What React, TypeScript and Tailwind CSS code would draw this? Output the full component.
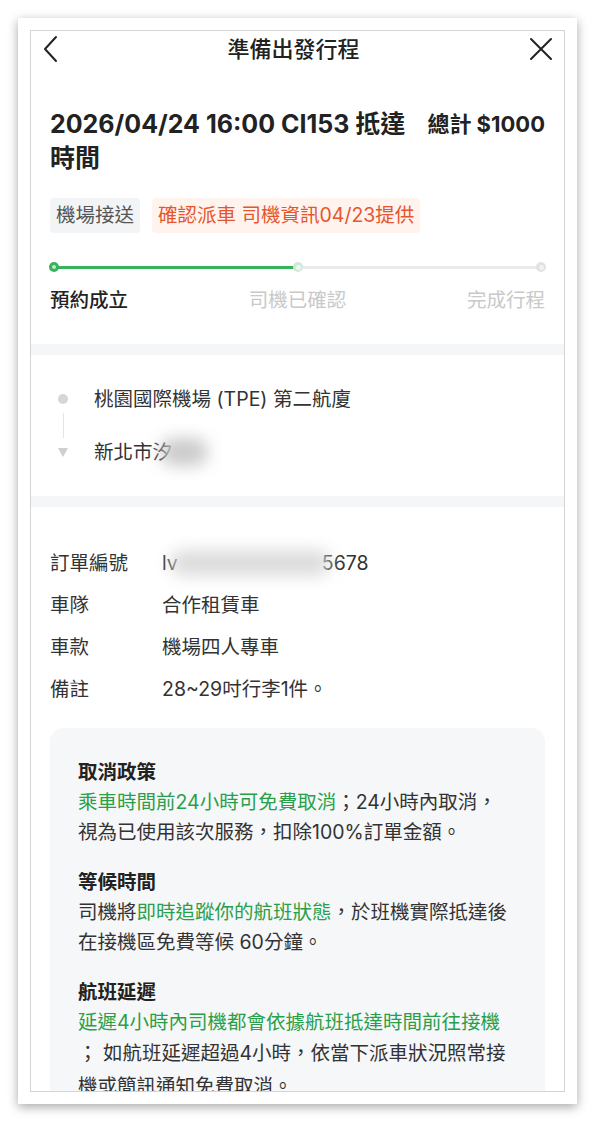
import React from "react";

const FONT = { fontFamily: '"Inter", "Noto Sans CJK TC", sans-serif' };

function Header() {
    return (
        <div className="flex items-center justify-between h-[36px] px-[11px]">
            <svg width="16" height="28" viewBox="0 0 16 28" fill="none">
                <path d="M14 2 L3 14 L14 26" stroke="#222" strokeWidth="2" strokeLinecap="round" strokeLinejoin="round" />
            </svg>
            <h1 className="text-[22px] font-medium text-[#222]">準備出發行程</h1>
            <svg width="24" height="24" viewBox="0 0 24 24" fill="none">
                <path d="M2 2 L22 22 M22 2 L2 22" stroke="#222" strokeWidth="2" strokeLinecap="round" />
            </svg>
        </div>
    );
}

function Progress() {
    return (
        <div className="mt-[29px]">
            <div className="relative h-[10px] mx-[-1px]">
                <div className="absolute left-[5px] right-[5px] top-[3.5px] h-[3px] bg-[#ebebeb]" />
                <div className="absolute left-[5px] w-[244px] top-[3.5px] h-[3px] bg-[#35b45a]" />
                <div className="absolute left-0 top-0 w-[10px] h-[10px] rounded-full bg-[#35b45a] flex items-center justify-center">
                    <div className="w-[4px] h-[4px] rounded-full bg-[#bfe8cb]" />
                </div>
                <div className="absolute left-[244px] top-0 w-[10px] h-[10px] rounded-full bg-[#cfe9d6] flex items-center justify-center">
                    <div className="w-[5px] h-[5px] rounded-full bg-[#eef7f1]" />
                </div>
                <div className="absolute right-0 top-0 w-[10px] h-[10px] rounded-full bg-[#e2e2e2] flex items-center justify-center">
                    <div className="w-[5px] h-[5px] rounded-full bg-[#f1f1f1]" />
                </div>
            </div>
            <div className="flex justify-between mt-[14px] text-[19.5px] leading-[28px]">
                <span className="text-[#222] font-medium">預約成立</span>
                <span className="text-[#c9c9c9]">司機已確認</span>
                <span className="text-[#c9c9c9]">完成行程</span>
            </div>
        </div>
    );
}

function Route() {
    return (
        <div className="px-[19px] pt-[30px] pb-[30px] text-[19.5px] leading-[28px] text-[#333]">
            <div className="flex items-center h-[28px]">
                <div className="w-[26px] flex justify-center">
                    <div className="w-[10px] h-[10px] rounded-full bg-[#d6d6d6]" />
                </div>
                <span className="ml-[18px]">桃園國際機場 (TPE) 第二航廈</span>
            </div>
            <div className="flex h-[25px]">
                <div className="w-[26px] flex justify-center">
                    <div className="w-px h-full bg-[#e4e4e4]" />
                </div>
            </div>
            <div className="flex items-center h-[28px]">
                <div className="w-[26px] flex justify-center">
                    <div className="w-0 h-0 border-l-[5px] border-r-[5px] border-t-[9px] border-l-transparent border-r-transparent border-t-[#cfcfcf]" />
                </div>
                <span className="ml-[18px] flex items-center">
                    新北市汐
                    <span className="inline-block w-[48px] h-[28px] ml-[-12px] rounded-full bg-[#cbcbcb] blur-[8px]" />
                </span>
            </div>
        </div>
    );
}

function DetailRow({ label, children }: { label: string; children: React.ReactNode }) {
    return (
        <div className="flex items-center h-[28px]">
            <span className="w-[112px] shrink-0">{label}</span>
            <span className="flex items-center">{children}</span>
        </div>
    );
}

function Policy() {
    return (
        <div className="mx-[19px] mt-[25px] rounded-[14px] bg-[#f6f7f9] px-[28px] pt-[29px] pb-[30px] text-[19.5px] leading-[30px] text-[#333]">
            <h3 className="font-semibold text-[#222]">取消政策</h3>
            <div className="whitespace-nowrap"><span className="text-[#2a9f4a]">乘車時間前24小時可免費取消</span>；24小時內取消，</div>
            <div className="whitespace-nowrap">視為已使用該次服務，扣除100%訂單金額。</div>

            <h3 className="font-semibold text-[#222] mt-[20px]">等候時間</h3>
            <div className="whitespace-nowrap">司機將<span className="text-[#2a9f4a]">即時追蹤你的航班狀態</span>，於班機實際抵達後</div>
            <div className="whitespace-nowrap">在接機區免費等候 60分鐘。</div>

            <h3 className="font-semibold text-[#222] mt-[20px]">航班延遲</h3>
            <div className="whitespace-nowrap text-[#2a9f4a]">延遲4小時內司機都會依據航班抵達時間前往接機</div>
            <div className="whitespace-nowrap leading-[33px]">；&nbsp;如航班延遲超過4小時，依當下派車狀況照常接</div>
            <div className="whitespace-nowrap leading-[32px]">機或簡訊通知免費取消。</div>
        </div>
    );
}

export default function App() {
    return (
        <div className="min-h-[1122px] bg-white pt-[18px] pl-[18px]" style={FONT}>
            <div className="w-[559px] h-[1086px] bg-white p-[12px] shadow-[0_3px_10px_rgba(0,0,0,0.35)]">
                <div className="h-[1062px] border border-[#d4d4d4] overflow-hidden bg-white">
                    <Header />

                    <div className="px-[19px] pt-[40px] pb-[30px]">
                        <div className="flex justify-between items-start">
                            <h2 className="text-[25px] leading-[34px] font-bold text-[#222]">
                                2026/04/24 16:00 CI153 抵達<br />時間
                            </h2>
                            <span className="text-[22px] leading-[34px] font-bold text-[#222] whitespace-nowrap">總計 $1000</span>
                        </div>
                        <div className="flex gap-[12px] mt-[23px] text-[19.5px]">
                            <span className="h-[35px] px-[6px] flex items-center rounded-[4px] bg-[#f3f4f6] text-[#555]">機場接送</span>
                            <span className="h-[35px] px-[6px] flex items-center rounded-[4px] bg-[#fff3ee] text-[#e4572e]">確認派車 司機資訊04/23提供</span>
                        </div>
                        <Progress />
                    </div>

                    <div className="h-[11px] bg-[#f5f6f8]" />
                    <Route />
                    <div className="h-[11px] bg-[#f5f6f8]" />

                    <div className="px-[19px] pt-[42px] flex flex-col gap-[14px] text-[19.5px] leading-[28px] text-[#333]">
                        <DetailRow label="訂單編號">
                            lv
                            <span className="inline-block w-[160px] h-[26px] mx-[-8px] rounded-full bg-[#dcdcdc] blur-[8px]" />
                            5678
                        </DetailRow>
                        <DetailRow label="車隊">合作租賃車</DetailRow>
                        <DetailRow label="車款">機場四人專車</DetailRow>
                        <DetailRow label="備註">28~29吋行李1件。</DetailRow>
                    </div>

                    <Policy />
                </div>
            </div>
        </div>
    );
}
